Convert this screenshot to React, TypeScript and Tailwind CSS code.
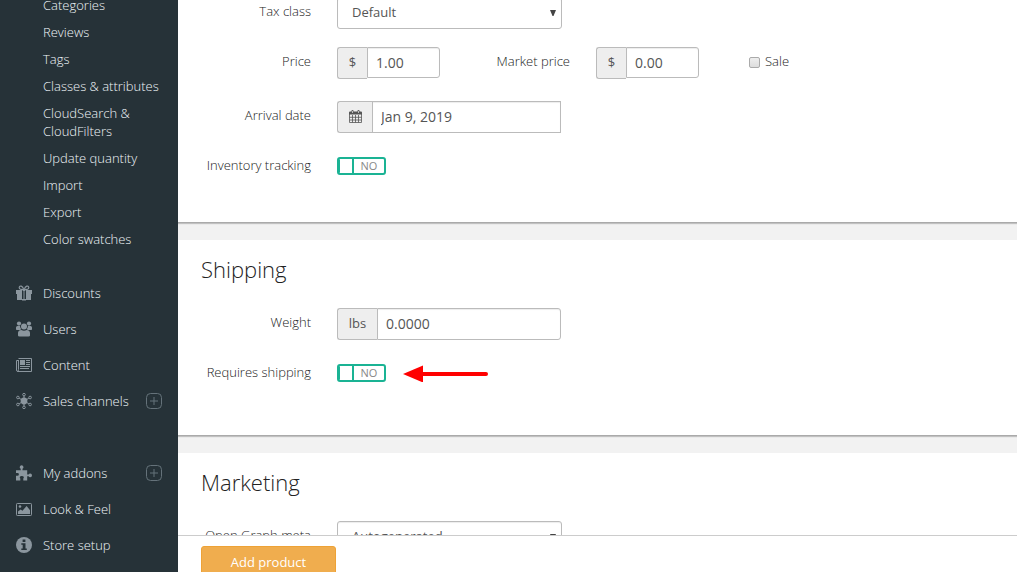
import React, { useState } from 'react';

type IconProps = { className?: string };

const svgBase = 'h-4 w-4 shrink-0 text-[#8b969e]';

function GiftIcon() {
  return (
    <svg viewBox="0 0 16 16" className={svgBase} aria-hidden="true">
      <path fill="none" stroke="currentColor" strokeWidth="1.2" d="M7.6 4.4C6.6 4.6 3 4.8 3.2 2.6C3.6.2 6.8.6 7.6 4.4ZM8.4 4.4C9.4 4.6 13 4.8 12.8 2.6C12.4.2 9.2.6 8.4 4.4Z" />
      <path fill="currentColor" d="M0 5h6v4H0zM10 5H16v4h-6zM6.800 4.200h2.400V6H6.800zM1 9h5v6H1zM10 9h5v6h-5zM7.500 6h1v8h-1zM6 14h4v1.500H6z" />
    </svg>
  );
}

function UsersIcon() {
  return (
    <svg viewBox="0 0 16 16" className={svgBase} aria-hidden="true" fill="currentColor">
      <circle cx="3" cy="2.600" r="2.100" />
      <circle cx="13" cy="2.600" r="2.100" />
      <circle cx="8" cy="5.600" r="3" />
      <path d="M0 8.300V6.500Q0 5 1.500 5H4Q4.200 7 5.200 8.300L4 9H.8Q0 9 0 8.300ZM16 8.300V6.500Q16 5 14.500 5H12Q11.800 7 10.800 8.300L12 9h3.200Q16 9 16 8.300ZM2 14.500V12Q2.200 9 5.300 9Q8 10.300 10.700 9Q13.800 9 14 12v2.500Q14 15.600 12.500 15.600h-9Q2 15.600 2 14.500Z" />
    </svg>
  );
}

function NewsIcon() {
  return (
    <svg viewBox="0 0 16 16" className={svgBase} aria-hidden="true">
      <path fill="none" stroke="currentColor" d="M2.500 1.500h13v13H2Q.5 14.500.5 13V3.500H2.500M2.500 3v9.500Q2.500 14.300 1.500 14.400" />
      <path fill="currentColor" d="M4 3h5v5H4zM10 3h4v1h-4zM10 5h4v1h-4zM10 7h4v1h-4zM4 9h10v1H4zM4 11h9v1H4z" />
    </svg>
  );
}

function HubIcon() {
  return (
    <svg viewBox="0 0 16 16" className={svgBase} aria-hidden="true">
      <circle cx="8" cy="8" r="3.400" fill="currentColor" />
      <g fill="none" stroke="currentColor">
        <path d="M8 3v10M3.200 5.300l9.600 5.400M12.800 5.300l-9.600 5.400" />
        <circle cx="8" cy="1.600" r="1.300" />
        <circle cx="8" cy="14.400" r="1.300" />
        <circle cx="1.900" cy="4.500" r="1.300" />
        <circle cx="14.100" cy="4.500" r="1.300" />
        <circle cx="1.900" cy="11.500" r="1.300" />
        <circle cx="14.100" cy="11.500" r="1.300" />
      </g>
    </svg>
  );
}

function PuzzleIcon() {
  return (
    <svg viewBox="0 0 16 16" className={svgBase} aria-hidden="true" fill="currentColor">
      <path d="M0 5.300h4.700V3.800Q3.600 3 3.700 1.900Q4 .3 5.600.3T7.500 1.900Q7.600 3 6.500 3.800v1.500h4.700v4.300h1.400Q13.200 8.500 14.300 8.600Q16 8.800 16 10.400T14.300 12.300Q13.200 12.400 12.600 11.300h-1.400v4.200H7.300v-2Q8 12.900 7.800 12Q7.400 10.900 5.800 10.900T3.800 12Q3.600 12.900 4.300 13.500v2H0v-4.700h1Q2.800 11.100 2.900 9.300Q2.800 7.700 1 8H0Z" />
    </svg>
  );
}

function ImageIcon() {
  return (
    <svg viewBox="0 0 16 16" className={svgBase} aria-hidden="true">
      <rect x=".5" y="2.500" width="15" height="12" rx=".8" fill="none" stroke="currentColor" />
      <circle cx="4" cy="5.500" r="1.300" fill="currentColor" />
      <path fill="currentColor" d="M2 13V10.500L4.600 8.400L6.500 9.700L10.600 4.900L14 9.200V13Z" />
    </svg>
  );
}

function InfoIcon() {
  return (
    <svg viewBox="0 0 16 16" className={svgBase} aria-hidden="true">
      <circle cx="8" cy="8" r="8" fill="currentColor" />
      <path fill="#263238" d="M6.600 2.500h2.800V5H6.600zM5.300 6.300h4.200v5.200h1.300V13H5.300v-1.500h1.400V7.800h-1.400z" />
    </svg>
  );
}

function CalendarIcon({ className }: IconProps) {
  return (
    <svg viewBox="0 0 13 13" className={className} aria-hidden="true">
      <path fill="none" stroke="currentColor" strokeWidth=".8" d="M.5 4v8.500h12V4M3.500 5v7.500M6.500 5v7.500M9.500 5v7.500M.5 7.300h12M.5 10h12" />
      <path fill="currentColor" d="M0 2.500Q0 1.500 1 1.500h1.500V.8Q2.500 0 3.500 0T4.500.8v.7h4V.8Q8.500 0 9.500 0t1 .8v.7H12q1 0 1 1V4.500H0Z" />
      <path stroke="#eee" strokeWidth=".7" d="M3.500 1v2M9.500 1v2" />
    </svg>
  );
}

const subItems = [
  'Categories',
  'Reviews',
  'Tags',
  'Classes & attributes',
  'CloudSearch & CloudFilters',
  'Update quantity',
  'Import',
  'Export',
  'Color swatches',
];

type NavEntry = { label: string; icon: React.ReactNode; expandable?: boolean };

const storeNav: NavEntry[] = [
  { label: 'Discounts', icon: <GiftIcon /> },
  { label: 'Users', icon: <UsersIcon /> },
  { label: 'Content', icon: <NewsIcon /> },
  { label: 'Sales channels', icon: <HubIcon />, expandable: true },
];

const setupNav: NavEntry[] = [
  { label: 'My addons', icon: <PuzzleIcon />, expandable: true },
  { label: 'Look & Feel', icon: <ImageIcon /> },
  { label: 'Store setup', icon: <InfoIcon /> },
];

function NavList({ items, className }: { items: NavEntry[]; className: string }) {
  return (
    <ul className={className}>
      {items.map((item) => (
        <li key={item.label} className="flex h-9 items-center justify-between pr-4 pl-4">
          <a href="#" className="flex items-center gap-[11px]">
            {item.icon}
            {item.label}
          </a>
          {item.expandable && (
            <button type="button" aria-label={`Expand ${item.label}`} className="text-[#65727a]">
              <svg viewBox="0 0 16 16" className="h-4 w-4" fill="none" stroke="currentColor" aria-hidden="true">
                <rect x=".5" y=".5" width="15" height="15" rx="4" />
                <path d="M8 4v8M4 8h8" />
              </svg>
            </button>
          )}
        </li>
      ))}
    </ul>
  );
}

function Sidebar() {
  return (
    <nav className="w-[178px] shrink-0 overflow-hidden bg-[#263238] text-[13px] leading-[18px] font-light text-[#f0f5f8]">
      <ul className="-mt-1 flex flex-col gap-[9px] pr-4 pl-[43px]">
        {subItems.map((label) => (
          <li key={label}>
            <a href="#" className="block">{label}</a>
          </li>
        ))}
      </ul>
      <NavList items={storeNav} className="mt-[27px]" />
      <NavList items={setupNav} className="mt-9" />
    </nav>
  );
}

function Label({ htmlFor, children }: { htmlFor: string; children: React.ReactNode }) {
  return (
    <label htmlFor={htmlFor} className="w-[110px] shrink-0 text-right text-[13px] leading-7 font-[350] whitespace-nowrap text-[#222]">
      {children}
    </label>
  );
}

function Row({ id, label, className = '', children }: { id: string; label: string; className?: string; children: React.ReactNode }) {
  return (
    <div className={`flex h-8 gap-[26px] ${className}`}>
      <Label htmlFor={id}>{label}</Label>
      {children}
    </div>
  );
}

function Select({ id, value }: { id: string; value: string }) {
  return (
    <div className="relative w-[225px]">
      <select id={id} defaultValue={value} className="h-8 w-full appearance-none rounded-[3px] border border-[#bbb] bg-white pr-6 pl-[14px] text-[13px] text-[#555] shadow-[inset_0_1px_1px_rgba(0,0,0,0.075)]">
        <option>{value}</option>
      </select>
      <svg viewBox="0 0 6 6" className="pointer-events-none absolute top-[13px] right-[6px] h-[6px] w-[6px]" aria-hidden="true">
        <path d="M0 0h6L3.500 6h-1z" fill="#444" />
      </svg>
    </div>
  );
}

function AddonInput({ id, value, addon, addonClass, inputClass }: { id: string; value: string; addon: React.ReactNode; addonClass: string; inputClass: string }) {
  return (
    <div className="flex items-start text-[#555]">
      <span className={`flex h-8 items-center justify-center rounded-l-[3px] border border-r-0 border-[#bbb] bg-[#eee] pb-px text-[13px] ${addonClass}`}>{addon}</span>
      <input id={id} defaultValue={value} className={`border border-[#bbb] bg-white pb-px pl-2 text-[14px] shadow-[inset_0_1px_1px_rgba(0,0,0,0.075)] ${inputClass}`} />
    </div>
  );
}

function Toggle({ id }: { id: string }) {
  const [on, setOn] = useState(false);
  return (
    <button
      id={id}
      type="button"
      role="switch"
      aria-checked={on}
      onClick={() => setOn(!on)}
      className={`mt-1.5 flex h-[18px] w-[49px] overflow-hidden rounded-[3px] border-2 border-[#1ab394] bg-white text-[11px] leading-[14px] text-[#888] ${on ? 'flex-row-reverse' : ''}`}
    >
      <span className="h-full w-[15px] border-r-2 border-l border-[#1ab394]" />
      <span className="flex-1 text-center">{on ? 'YES' : 'NO'}</span>
    </button>
  );
}

function Arrow() {
  return (
    <svg viewBox="0 0 86 18" className="mt-1.5 -ml-[9px] h-[18px] w-[86px]" aria-hidden="true">
      <path d="M20 10h63" stroke="#f00" strokeWidth="4" strokeLinecap="round" />
      <path d="M0 10L20 1.500v17z" fill="#f00" />
    </svg>
  );
}

const card = 'border-b border-[#aaa] bg-white px-[23px] shadow-[0_1px_1px_rgba(0,0,0,0.2)]';
const heading = 'mb-6 text-[22px] leading-[30px] font-[350] text-[#222]';

export default function App() {
  return (
    <div className="flex h-screen overflow-hidden bg-[#f2f2f2] font-['Open_Sans',sans-serif]">
      <Sidebar />
      <div className="flex min-w-0 flex-1 flex-col">
        <main className="flex min-h-0 flex-1 flex-col gap-[17px] overflow-hidden">
          <section className={`-mt-[3px] shrink-0 pb-[39px] ${card}`}>
            <Row id="tax" label="Tax class">
              <Select id="tax" value="Default" />
            </Row>
            <div className="mt-[18px] flex">
              <Row id="price" label="Price">
                <AddonInput id="price" value="1.00" addon="$" addonClass="w-[30px]" inputClass="h-[31px] w-[73px] rounded-r-[3px]" />
              </Row>
              <Row id="market" label="Market price" className="ml-5">
                <AddonInput id="market" value="0.00" addon="$" addonClass="w-[30px]" inputClass="h-[31px] w-[73px] rounded-r-[3px]" />
              </Row>
              <label className="ml-[50px] flex h-[30px] items-center gap-[5px] text-[13px] font-[350] text-[#222]">
                <input type="checkbox" className="h-[11px] w-[11px] appearance-none rounded-[2px] border border-[#aaa] bg-linear-to-b from-[#eee] to-[#ddd] checked:bg-[#1ab394]" />
                Sale
              </label>
            </div>
            <Row id="arrival" label="Arrival date" className="mt-[22px]">
              <AddonInput id="arrival" value="Jan 9, 2019" addon={<CalendarIcon className="h-[13px] w-[13px]" />} addonClass="w-[35px]" inputClass="h-8 w-[189px]" />
            </Row>
            <Row id="tracking" label="Inventory tracking" className="mt-[18px]">
              <Toggle id="tracking" />
            </Row>
          </section>

          <section className={`shrink-0 pt-[14px] pb-[45px] ${card}`}>
            <h2 className={heading}>Shipping</h2>
            <Row id="weight" label="Weight">
              <AddonInput id="weight" value="0.0000" addon="lbs" addonClass="w-10" inputClass="h-8 w-[184px] rounded-r-[3px]" />
            </Row>
            <Row id="requires" label="Requires shipping" className="mt-[18px]">
              <Toggle id="requires" />
              <Arrow />
            </Row>
          </section>

          <section className={`shrink-0 pt-[14px] pb-10 ${card}`}>
            <h2 className={heading}>Marketing</h2>
            <Row id="og" label="Open Graph meta">
              <Select id="og" value="Autogenerated" />
            </Row>
          </section>
        </main>
        <footer className="h-[37px] shrink-0 overflow-hidden border-t border-[#ccc] bg-white px-[23px] pt-[10px]">
          <button type="button" className="h-[34px] w-[135px] rounded-[3px] border border-[#eea236] bg-[#f0ad4e] text-[13px] text-white">
            Add product
          </button>
        </footer>
      </div>
    </div>
  );
}
